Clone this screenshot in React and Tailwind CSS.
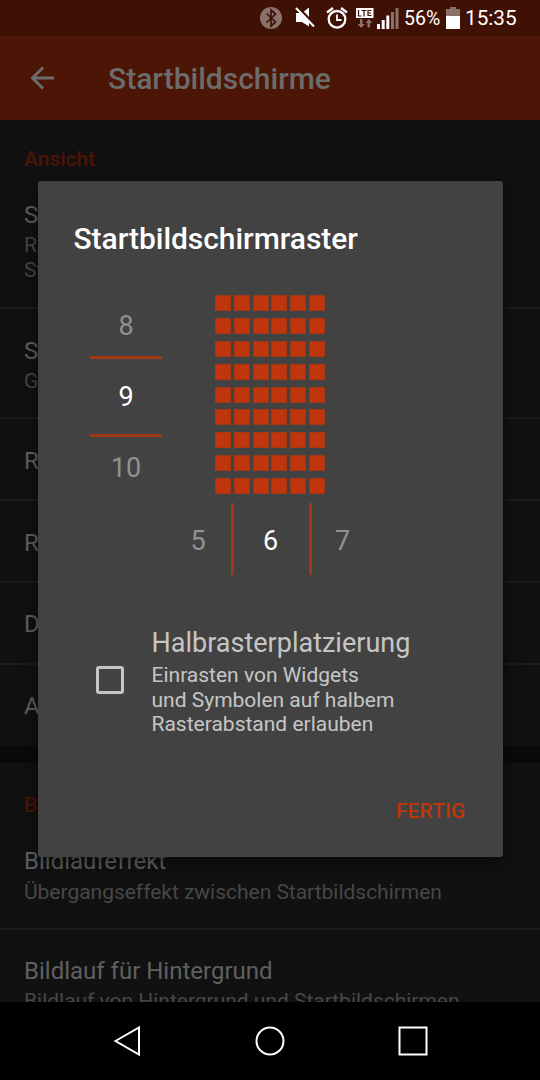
const ROBOTO = "font-['Roboto',sans-serif]";

function StatusBar() {
  return (
    <div className="flex h-9 shrink-0 items-center bg-[#3f1105] pl-[260px] text-white">
      <svg className="h-[22px] w-[22px]" viewBox="0 0 22 22" fill="none">
        <circle cx="11" cy="11" r="11" fill="#8b716a" />
        <path d="M6.500 6.500l9 8.500-4.500 4V3l4.500 4-9 8.500" stroke="#3f1105" strokeWidth="1.700" />
      </svg>
      <svg className="ml-[13px] h-[22px] w-5" viewBox="0 0 20 22">
        <path d="M1 6h6l7-5.500v19L7 15H1z" fill="#fff" />
        <path d="M3 0l17.500 19" stroke="#3f1105" strokeWidth="2.500" />
        <path d="M1 1l18 18.500" stroke="#fff" strokeWidth="2" />
      </svg>
      <svg className="ml-[11px] h-[22px] w-[22px]" viewBox="0 0 22 22" fill="none" stroke="#fff">
        <circle cx="11" cy="12.300" r="8.300" strokeWidth="2.300" />
        <path d="M1 5.500l6-4.500M21 5.500l-6-4.500" strokeWidth="2.300" />
        <path d="M11 7.500v5.500h4.500" strokeWidth="1.800" />
      </svg>
      <svg className="ml-2 h-[22px] w-[18px]" viewBox="0 0 18 22">
        <path d="M0 1h17.500v10H0z" fill="#fff" />
        <path d="M2.500 3v6h3M5.500 3.500h5M8 3.500v6M15.500 3.500H12v5h3.500M12 6h3" fill="none" stroke="#3f1105" strokeWidth="1.200" />
        <path d="M4 12h2.500v5h2.300L5.250 21 1.500 17H4zM11.500 20.500H14V16h2.300l-3.500-4L9.500 16h2z" fill="#8b716a" />
      </svg>
      <svg className="ml-[3px] h-[22px] w-[22px]" viewBox="0 0 22 22">
        <path d="M0 17h3v5H0zM4.700 13h3v9h-3zM9.300 8.500h3V22h-3z" fill="#fff" />
        <path d="M14 5h3v17h-3zM18.500 1h3v21h-3z" fill="#8b716a" />
      </svg>
      <span className="relative top-px ml-[5px] w-[37px] text-[19.500px] whitespace-nowrap">56%</span>
      <svg className="ml-[5px] h-[22px] w-[14px]" viewBox="0 0 14 22">
        <path d="M4 0h6v2h4v7H0V2h4z" fill="#8b716a" />
        <path d="M0 9h14v13H0z" fill="#fff" />
      </svg>
      <span className="relative top-px ml-[5px] text-[20.700px] whitespace-nowrap">15:35</span>
    </div>
  );
}

function Row({ title, lines = [], className, gap = "pt-1" }) {
  return (
    <div className={`shrink-0 border-b-2 border-[#1c1c1c] px-6 ${className}`}>
      <div className="text-[24px] leading-[28px] text-[#606060]">{title}</div>
      {lines.length > 0 && (
        <div className={`text-[21px] leading-[25px] tracking-[-0.02px] whitespace-nowrap text-[#474747] ${gap}`}>
          {lines.map((line) => (
            <div key={line}>{line}</div>
          ))}
        </div>
      )}
    </div>
  );
}

function Settings() {
  return (
    <main className="flex min-h-0 flex-1 flex-col overflow-hidden">
      <h2 className="h-[53px] shrink-0 px-6 pt-[27px] text-[21px] leading-[25px] font-medium text-[#4e1404]">Ansicht</h2>
      <Row className="h-[136px] pt-7" title="Startbildschirmraster" lines={["Rastergröße für die Startbildschirme", "Startbildschirm anpassen"]} />
      <Row className="h-[110px] pt-7" title="Symbole" lines={["Größe und Beschriftung"]} />
      <Row className="h-[82px] pt-7" title="Rand in der Breite" />
      <Row className="h-[82px] pt-7" title="Rand in der Höhe" />
      <Row className="h-[82px] pt-[27px]" title="Dauerhafte Suchleiste" />
      <div className="h-[81px] shrink-0 px-6 pt-[27px] text-[24px] leading-[28px] text-[#606060]">App-Suchleiste</div>
      <div className="h-[17px] shrink-0 bg-[#0a0a0a]" />
      <h2 className="h-[56px] shrink-0 px-6 pt-[30px] text-[21px] leading-[25px] font-medium text-[#4e1404]">Bildlauf</h2>
      <Row className="h-[111px] pt-7" gap="pt-[5px]" title="Bildlaufeffekt" lines={["Übergangseffekt zwischen Startbildschirmen"]} />
      <Row className="h-[110px] pt-[27px]" gap="pt-1" title="Bildlauf für Hintergrund" lines={["Bildlauf von Hintergrund und Startbildschirmen"]} />
    </main>
  );
}

function GridPreview() {
  return (
    <div className="grid w-[110px] grid-cols-6 gap-x-[2.800px] gap-y-[6.900px]">
      {Array.from({ length: 54 }, (_, i) => (
        <div key={i} className="h-4 border border-[#a53614] bg-[#bf360c]" />
      ))}
    </div>
  );
}

function Dialog() {
  return (
    <section className="absolute top-[181px] left-[37.500px] flex h-[676px] w-[465px] flex-col rounded-[3px] bg-[#424242] shadow-[0_4px_18px_rgba(0,0,0,0.5)]">
      <h1 className="mt-[40px] pl-[36px] text-[30px] leading-[36px] font-medium tracking-[-0.04px] text-white">Startbildschirmraster</h1>
      <div className="mt-[38px] flex h-[200px] pl-[52.500px]">
        <div className="flex w-[72px] flex-col items-center text-[27px] leading-[32px] text-[#919191]">
          <div className="flex h-[61px] shrink-0 items-center">8</div>
          <div className="flex h-[81px] w-full shrink-0 items-center justify-center border-y-[3px] border-[#a53614] text-white">9</div>
          <div className="flex h-[61px] shrink-0 items-center pt-px">10</div>
        </div>
        <div className="ml-[53px]">
          <GridPreview />
        </div>
      </div>
      <div className="mt-[8px] ml-[128px] flex h-[72px] items-center text-center text-[27px] leading-[32px] text-[#919191]">
        <div className="w-[65px] pt-[3px]">5</div>
        <div className="flex h-[72px] w-[81px] items-center justify-center border-x-[3px] border-[#a53614] pt-1 pr-px text-white">6</div>
        <div className="w-[62px] pt-[3px]">7</div>
      </div>
      <label className="mt-[51px] flex">
        <span className="mt-[40px] ml-[58px] h-7 w-7 shrink-0 rounded-[3px] border-[3px] border-[#c6c6c6]" />
        <span className="ml-[28px] text-[#c6c6c6]">
          <span className="block pt-px text-[27px] leading-[32px]">Halbrasterplatzierung</span>
          <span className="mt-[4px] block text-[21px] leading-[24.700px]">Einrasten von Widgets<br />und Symbolen auf halbem<br />Rasterabstand erlauben</span>
        </span>
      </label>
      <button className="mt-auto mr-[37px] mb-[33px] self-end text-[21px] leading-[25px] font-medium tracking-[0.1px] text-[#bf360c]">FERTIG</button>
    </section>
  );
}

function NavBar() {
  return (
    <nav className="flex h-[78px] shrink-0 items-center justify-between bg-black pr-[111px] pl-[113px]">
      <svg className="h-8 w-8" viewBox="0 0 32 32" fill="none" stroke="#fff" strokeWidth="2">
        <path d="M2.500 16L26 2.500v27z" />
      </svg>
      <svg className="h-8 w-8" viewBox="0 0 32 32" fill="none" stroke="#fff" strokeWidth="2">
        <circle cx="15" cy="16" r="13.500" />
      </svg>
      <svg className="h-8 w-8" viewBox="0 0 32 32" fill="none" stroke="#fff" strokeWidth="2">
        <path d="M2.500 2.500h27v27h-27z" />
      </svg>
    </nav>
  );
}

export default function App() {
  return (
    <div className={`relative flex h-[1080px] w-[540px] flex-col overflow-hidden bg-[#111] ${ROBOTO}`}>
      <StatusBar />
      <header className="flex h-[84px] shrink-0 items-center bg-[#4c1505] pl-[30px] text-[#6c6c6c]">
        <svg className="h-6 w-6" viewBox="0 0 24 24" fill="none" stroke="currentColor" strokeWidth="3">
          <path d="M24 12H3M13 1.500L2.500 12 13 22.500" />
        </svg>
        <div className="ml-[54px] pt-[2px] text-[30px] leading-[36px] font-medium">Startbildschirme</div>
      </header>
      <Settings />
      <NavBar />
      <Dialog />
    </div>
  );
}
